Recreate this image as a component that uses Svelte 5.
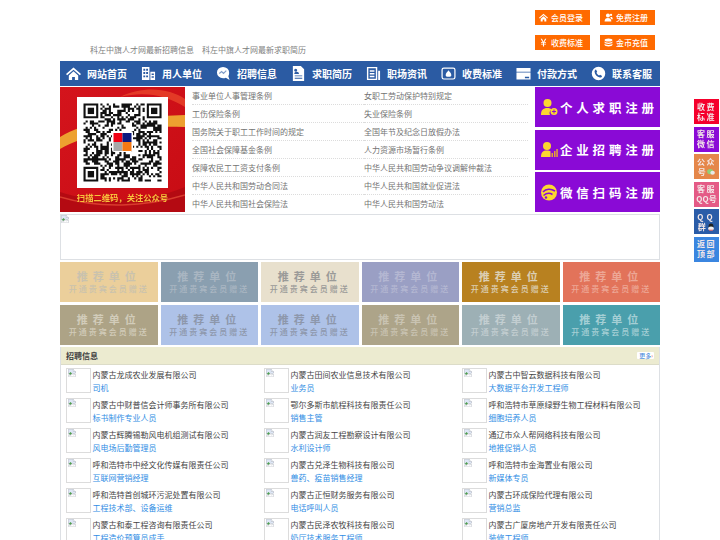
<script>
  const navItems = [
    ['home', '网站首页'], ['building', '用人单位'], ['chat', '招聘信息'], ['doc', '求职简历'],
    ['news', '职场资讯'], ['fee', '收费标准'], ['card', '付款方式'], ['phone', '联系客服']
  ];
  const topButtons = [['home', '会员登录'], ['users', '免费注册'], ['yen', '收费标准'], ['coins', '金币充值']];
  const laws = [
    '事业单位人事管理条例', '女职工劳动保护特别规定',
    '工伤保险条例', '失业保险条例',
    '国务院关于职工工作时间的规定', '全国年节及纪念日放假办法',
    '全国社会保障基金条例', '人力资源市场暂行条例',
    '保障农民工工资支付条例', '中华人民共和国劳动争议调解仲裁法',
    '中华人民共和国劳动合同法', '中华人民共和国就业促进法',
    '中华人民共和国社会保险法', '中华人民共和国劳动法'
  ];
  const tiles = [
    ['#ebcf9b', '#c9c2ae'], ['#8a9fb0', '#a9b6c2'], ['#e8e0cd', '#9a9a98'],
    ['#9a9fc4', '#b4b7d2'], ['#b88120', '#dccfb4'], ['#e2735a', '#eda796'],
    ['#ada386', '#d2ccba'], ['#aec2e8', '#8d97ab'], ['#aec2e8', '#8d97ab'],
    ['#ada489', '#c9c3b2'], ['#9db0b5', '#c3ced1'], ['#4a9fac', '#a5cfd5']
  ];
  const jobs = [
    ['内蒙古龙成农业发展有限公司', '司机'], ['内蒙古田间农业信息技术有限公司', '业务员'], ['内蒙古中智云数据科技有限公司', '大数据平台开发工程师'],
    ['内蒙古中财普信会计师事务所有限公司', '标书制作专业人员'], ['鄂尔多斯市航程科技有限责任公司', '销售主管'], ['呼和浩特市草原绿野生物工程材料有限公司', '细胞培养人员'],
    ['内蒙古辉腾锡勒风电机组测试有限公司', '风电场后勤管理员'], ['内蒙古润友工程勘察设计有限公司', '水利设计师'], ['通辽市众人帮网络科技有限公司', '地推促销人员'],
    ['呼和浩特市中经文化传媒有限责任公司', '互联网营销经理'], ['内蒙古兑泽生物科技有限公司', '兽药、疫苗销售经理'], ['呼和浩特市金海置业有限公司', '新媒体专员'],
    ['呼和浩特首创城环污泥处置有限公司', '工程技术部、设备运维'], ['内蒙古正恒财务服务有限公司', '电话呼叫人员'], ['内蒙古环成保险代理有限公司', '营销总监'],
    ['内蒙古和泰工程咨询有限责任公司', '工程造价预算员成手'], ['内蒙古民泽农牧科技有限公司', '奶厅技术服务工程师'], ['内蒙古广厦房地产开发有限责任公司', '装修工程师']
  ];
  const side = [
    ['收费', '标准', '#f5002c', ''], ['客服', '微信', '#8a0ad6', ''], ['公众', '号', '#e5874a', 'wx'],
    ['客服', 'QQ号', '#e45a86', ''], ['QQ', '群', '#2a5ca8', 'qq'], ['返回', '顶部', '#3b86e0', '']
  ];

  // Deterministic pseudo QR matrix
  const N = 37;
  let seed = 20240;
  const rnd = () => ((seed = (seed * 1103515245 + 12345) & 0x7fffffff) >> 12) % 100;
  let qr = '';
  const inFinder = (x, y) => (x < 8 && y < 8) || (x > N - 9 && y < 8) || (x < 8 && y > N - 9);
  for (let y = 0; y < N; y++) {
    for (let x = 0; x < N; x++) {
      if (inFinder(x, y)) continue;
      if (rnd() < 52) qr += `M${x} ${y}h1v1h-1z`;
    }
  }
  const finders = [[0, 0], [N - 7, 0], [0, N - 7]];
</script>

{#snippet broken()}
  <svg class="broken" viewBox="0 0 16 16" aria-hidden="true">
    <path d="M.5 .5h10l4.500 4.500v3l-3 2-3-2-3 3-5-1z" fill="#dfe8f7" stroke="#a8aeb8"/>
    <path d="M10.500 .5v4.500h4.500" fill="#fff" stroke="#a8aeb8"/>
    <path d="M1.500 10l3.500-4 3 3-2.500 2.500z" fill="#4f9e4f"/>
    <path d="M.5 12l5 1 3-3 3 2 3.500-2v5.500H.5z" fill="#fff" stroke="#a8aeb8" stroke-width=".8"/>
  </svg>
{/snippet}

{#snippet icon(name)}
  <svg class="ic" viewBox="0 0 16 16" aria-hidden="true" fill="currentColor">
    {#if name === 'home'}
      <path d="M8 1.5 0 8.6l1.2 1.3L8 4l6.8 5.9L16 8.6z"/><path d="M3 10 8 5.6l5 4.4v5H9.5v-3.4h-3V15H3z"/>
    {:else if name === 'building'}
      <path fill-rule="evenodd" d="M1 1h8v14H1zM2.5 3v2h2V3zm3 0v2h2V3zm-3 3.500v2h2v-2zm3 0v2h2v-2zm-3 3.500v2h2v-2zm3 0v2h2v-2zM10 6h5v9h-5zm1.300 2v1.500h2.400V8zm0 3v1.500h2.400V11z"/>
    {:else if name === 'chat'}
      <path d="M7.500 1a6.500 6 0 0 0-6.500 6 6.500 6 0 0 0 6.500 6c1.200 0 2-.1 3-.6l4 2.600-1.300-4.200A6 6 0 0 0 14 7a6.500 6 0 0 0-6.500-6z"/>
      <path d="M3.500 8l2.500-2 2 2 3-3" fill="none" stroke="#7f9cc8" stroke-width="1.200"/>
    {:else if name === 'doc'}
      <path fill-rule="evenodd" d="M2 0h8.500L14 3.500V16H2zM5 3a1.600 1.600 0 1 0 .01 0zM3.500 8.500h5c0-1.800-1-2.500-2.500-2.500s-2.500.7-2.500 2.500zM4 10v1h8v-1zm0 2.500v1h8v-1z"/>
    {:else if name === 'news'}
      <path fill-rule="evenodd" d="M1 1h11v14H1zm1.500 1.500v11h8v-11zM4 4.500h5V6H4zm0 3h5V9H4zm0 3h5V12H4zM13 5h2v10h-2z"/>
    {:else if name === 'fee'}
      <path fill-rule="evenodd" d="M3 1.500h10A2.500 2.500 0 0 1 15.500 4v8a2.500 2.500 0 0 1-2.500 2.500H3A2.500 2.500 0 0 1 .5 12V4A2.500 2.500 0 0 1 3 1.500zm0 1.300A1.200 1.200 0 0 0 1.800 4v8A1.200 1.200 0 0 0 3 13.200h10a1.200 1.200 0 0 0 1.200-1.200V4A1.200 1.200 0 0 0 13 2.800z"/>
      <path d="M8 4.500c.6 1.200 3 2.800 3 5 0 1.500-1 2-3 2s-3-.5-3-2c0-2.200 2.400-3.800 3-5z"/>
    {:else if name === 'card'}
      <path fill-rule="evenodd" d="M.5 2h15v4H.5zM.5 7h15v7.500H.5zm9 4.500V13h4.500v-1.500z"/>
    {:else if name === 'phone'}
      <path fill-rule="evenodd" d="M8 .8a7.200 7.200 0 1 0 0 14.400A7.200 7.200 0 0 0 8 .8zM5.300 3.800l1.300 2.300-.8 1.100c.5 1.200 1.500 2.200 2.800 2.900l1.100-.8 2.100 1.400c-.3 1.200-1.300 1.800-2.300 1.600C6.400 11.700 4 9 3.800 6.200c-.1-1.100.5-2 1.500-2.400z"/>
    {:else if name === 'users'}
      <circle cx="7" cy="4.500" r="3.500"/><path d="M1 15c0-4 2.500-6 6-6s6 2 6 6z"/><circle cx="12.500" cy="3.500" r="2"/><path d="M11 7h2c1.500 0 2.500 1 2.500 4H13z"/>
    {:else if name === 'yen'}
      <path d="M3 1.500h2.200L8 6.500l2.800-5H13L9.800 7H12.500v1.400H9V10h3.500v1.400H9V15H7v-3.600H3.500V10H7V8.400H3.500V7h2.700z"/>
    {:else if name === 'coins'}
      <ellipse cx="8" cy="3.500" rx="7" ry="2.800"/><path d="M1 5.800c1 1.800 3.500 2.500 7 2.500s6-.7 7-2.500V8c-1 1.800-3.500 2.500-7 2.500S2 9.800 1 8z"/><path d="M1 9.800c1 1.800 3.500 2.500 7 2.500s6-.7 7-2.500V12.500C14 14.300 11.500 15 8 15s-6-.7-7-2.500z"/>
    {/if}
  </svg>
{/snippet}

<div class="page">
  <header class="top">
    <div class="latest"><span>科左中旗人才网最新招聘信息</span><span>科左中旗人才网最新求职简历</span></div>
    <div class="topbtns">
      {#each topButtons as [ic, label]}
        <a class="topbtn">{@render icon(ic)}<span>{label}</span></a>
      {/each}
    </div>
  </header>

  <nav class="nav">
    {#each navItems as [ic, label]}
      <a class="navitem"><span class="navic">{@render icon(ic)}</span><span>{label}</span></a>
    {/each}
  </nav>

  <section class="hero">
    <svg class="qrimg" viewBox="0 0 125 125" role="img" aria-label="二维码">
      <defs>
        <linearGradient id="redbg" x1="0" y1="0" x2="1" y2="1">
          <stop offset="0" stop-color="#d4141c"/><stop offset="1" stop-color="#c80c14"/>
        </linearGradient>
      </defs>
      <rect width="125" height="125" fill="url(#redbg)"/>
      <path d="M60 10C85 -2 110 2 125 12V20C105 8 85 4 60 10z" fill="#e8452a" opacity=".8"/>
      <path d="M0 50C25 35 60 30 125 28V40C70 38 30 45 0 62z" fill="#eda030"/>
      <path d="M0 105C40 118 90 115 125 100V125H0z" fill="#b40a12"/>
      <path d="M0 110C40 122 85 120 125 108" fill="none" stroke="#e8503a" stroke-width="1.500" opacity=".7"/>
      <rect x="17" y="10" width="91" height="91" fill="#fff"/>
      <g transform="translate(23.500 16.500) scale(2.110)">
        <path d={qr} fill="#111"/>
        {#each finders as [fx, fy]}
          <path fill-rule="evenodd" d={`M${fx} ${fy}h7v7h-7zM${fx + 1} ${fy + 1}v5h5v-5z`} fill="#111"/>
          <rect x={fx + 2} y={fy + 2} width="3" height="3" fill="#111"/>
        {/each}
      </g>
      <rect x="52" y="44" width="21" height="21" rx="2" fill="#fff"/>
      <rect x="53.500" y="46" width="9" height="9" fill="#f00014"/>
      <rect x="62.500" y="46" width="9" height="9" fill="#0c1a80"/>
      <rect x="53.500" y="55" width="9" height="9" fill="#a8a8a8"/>
      <rect x="62.500" y="55" width="9" height="9" fill="#f57a14"/>
      <text x="62.500" y="114" text-anchor="middle" class="qrcap">扫描二维码，关注公众号</text>
    </svg>

    <ul class="laws">
      {#each laws as law}
        <li>{law}</li>
      {/each}
    </ul>

    <div class="regs">
      <a class="reg">
        <svg class="regic" viewBox="0 0 18 18" aria-hidden="true"><circle cx="7.500" cy="5" r="4" fill="#fbd631"/><path d="M1 17c0-5 2-7 6.500-7 2 0 3 .5 4 1.500A4.500 4.500 0 0 0 10 17z" fill="#fbd631"/><circle cx="14" cy="13.500" r="3.500" fill="#fbd631"/><path d="M12 13.500h4M14 11.500v4" stroke="#8a0ad6" stroke-width="1"/></svg>
        <span>个人求职注册</span>
      </a>
      <a class="reg">
        <svg class="regic" viewBox="0 0 18 18" aria-hidden="true"><circle cx="7" cy="5" r="4" fill="#fbd631"/><path d="M1 16c0-5 2-6.500 6-6.500 1.500 0 2.500.2 3.500.8V16z" fill="#fbd631"/><path d="M11.500 12h1.500v4h-1.500zM14 10h1.500v6H14zM16.300 8h1.500v8h-1.500z" fill="#e8a830"/></svg>
        <span>企业招聘注册</span>
      </a>
      <a class="reg">
        <svg class="regic" viewBox="0 0 18 18" aria-hidden="true"><circle cx="9" cy="9.500" r="8" fill="#fbd631"/><path d="M3 9c3-3.500 8-3.500 12-1M3.500 12.500c3-2.500 6.500-2.500 9-1" fill="none" stroke="#8a0ad6" stroke-width="1.500"/><circle cx="6" cy="14.500" r="1.200" fill="#8a0ad6"/></svg>
        <span>微信扫码注册</span>
      </a>
    </div>
  </section>

  <div class="banner">{@render broken()}</div>

  <section class="tiles">
    {#each tiles as [bg, fg]}
      <a class="tile" style="background:{bg};color:{fg}">
        <strong>推荐单位</strong>
        <span>开通贵宾会员赠送</span>
      </a>
    {/each}
  </section>

  <section class="panel">
    <div class="panelhead"><h2>招聘信息</h2><a class="more">更多<i>›</i></a></div>
    <div class="jobs">
      {#each jobs as [company, job]}
        <div class="job">
          <div class="thumb">{@render broken()}</div>
          <div class="jobtext"><div class="company">{company}</div><a class="jobname">{job}</a></div>
        </div>
      {/each}
    </div>
  </section>
</div>

<aside class="side">
  {#each side as [a, b, bg, badge]}
    <a class="sideitem" style="background:{bg}">
      <span class:wide={a === 'QQ'}>{a}</span>
      <span class="second" class:tight={b === 'QQ号'}>{b}
        {#if badge === 'wx'}
          <svg class="sideic" viewBox="0 0 10 8" aria-hidden="true"><ellipse cx="4" cy="3.500" rx="3.800" ry="3.200" fill="#8fd07a"/><ellipse cx="7" cy="5" rx="2.800" ry="2.500" fill="#e8e8e8"/></svg>
        {:else if badge === 'qq'}
          <svg class="sideic" viewBox="0 0 10 10" aria-hidden="true"><ellipse cx="5" cy="4" rx="3" ry="3.500" fill="#222"/><ellipse cx="5" cy="7" rx="3.500" ry="2.500" fill="#eee"/><path d="M2 8.500h6l-1 1H3z" fill="#e33"/></svg>
        {/if}
      </span>
    </a>
  {/each}
</aside>

<style>
  :global(html), :global(body) {
    margin: 0;
    background: #fff;
    overflow: hidden;
  }
  .page {
    width: 600px;
    margin-left: 60px;
    font-family: "Noto Sans CJK SC", "Liberation Sans", sans-serif;
    font-size: 8px;
    color: #666;
  }
  a { text-decoration: none; display: block; }
  .top {
    height: 61px;
    display: flex;
    justify-content: space-between;
    box-sizing: border-box;
    padding: 10px 5px 0 30px;
  }
  .latest {
    display: flex;
    gap: 8px;
    margin-top: 35px;
    line-height: 10px;
    color: #808080;
  }
  .topbtns {
    display: grid;
    grid-template-columns: 55px 55px;
    grid-auto-rows: 15px;
    gap: 10px;
  }
  .topbtn {
    background: #ff6a00;
    color: #fff;
    display: flex;
    align-items: center;
    gap: 3px;
    padding-left: 4px;
    line-height: 15px;
    font-weight: 500;
  }
  .topbtn .ic { width: 9px; height: 9px; }
  .nav {
    height: 25px;
    background: #2b5ba3;
    display: grid;
    grid-template-columns: repeat(8, 75px);
  }
  .navitem {
    color: #fff;
    display: flex;
    align-items: center;
    font-size: 10px;
    font-weight: 700;
    padding-left: 6px;
    line-height: 25px;
  }
  .navic {
    width: 21px;
    display: flex;
  }
  .navic .ic { width: 15px; height: 15px; }
  .hero {
    margin-top: 1px;
    display: flex;
    height: 125px;
  }
  .qrimg {
    width: 125px;
    height: 125px;
    flex: none;
    filter: blur(.25px);
  }
  .qrcap {
    font-size: 8.300px;
    font-weight: 700;
    fill: #f7c23c;
  }
  .laws {
    list-style: none;
    margin: 0 0 0 7px;
    padding: 0;
    width: 336px;
    display: grid;
    grid-template-columns: 172px 164px;
    grid-auto-rows: 18px;
    color: #737373;
    flex: none;
  }
  .laws li {
    line-height: 17px;
    border-bottom: 1px dotted #dcdcdc;
  }
  .laws li:nth-last-child(-n + 2) { border-bottom: 0; }
  .regs {
    margin-left: 7px;
    width: 125px;
    display: grid;
    grid-auto-rows: 40px;
    gap: 2.500px;
  }
  .reg {
    background: #8a0ad6;
    color: #fff;
    display: flex;
    align-items: center;
    padding-left: 5px;
    font-size: 12.500px;
    font-weight: 700;
    letter-spacing: 3.800px;
    white-space: nowrap;
  }
  .regic { width: 18px; height: 18px; margin-right: 2px; flex: none; }
  .banner {
    margin-top: 2px;
    height: 46px;
    box-sizing: border-box;
    border: 1px solid #dde0e4;
    line-height: 0;
  }
  .broken { width: 8px; height: 8px; display: block; }
  .tiles {
    margin-top: 2px;
    display: grid;
    grid-template-columns: repeat(6, 1fr);
    grid-auto-rows: 40px;
    gap: 2.500px 3px;
  }
  .tile {
    display: flex;
    flex-direction: column;
    align-items: center;
    padding-top: 7px;
    box-sizing: border-box;
  }
  .tile strong {
    font-size: 11px;
    line-height: 14px;
    letter-spacing: 5px;
    font-weight: 700;
  }
  .tile span {
    font-size: 8px;
    line-height: 12px;
    letter-spacing: 2px;
    font-weight: 500;
  }
  .panel {
    margin-top: 2.500px;
    border-right: 1px solid #dde0e4;
    border-left: 1px solid #dde0e4;
  }
  .panelhead {
    height: 18px;
    background: #ecebd0;
    border-bottom: 1px solid #dcdcc8;
    box-sizing: border-box;
    display: flex;
    align-items: center;
    justify-content: space-between;
    padding: 0 5px;
  }
  .panelhead h2 {
    margin: 0;
    font-size: 8px;
    font-weight: 700;
    color: #444;
  }
  .more {
    background: #fff;
    color: #3a7fd8;
    font-size: 6px;
    line-height: 7px;
    padding: 0 1px 0 2px;
    border-radius: 1px;
  }
  .more i { color: #e66; font-style: normal; }
  .jobs {
    padding: 3px 0 0 4.500px;
    display: grid;
    grid-template-columns: repeat(3, 198px);
    grid-auto-rows: 30px;
  }
  .job {
    display: flex;
    gap: 2px;
    align-items: flex-start;
  }
  .thumb {
    width: 25px;
    height: 25px;
    box-sizing: border-box;
    border: 1px solid #dcdcdc;
    padding: 0 0 0 1px;
    flex: none;
    line-height: 0;
  }
  .jobtext {
    line-height: 13px;
    white-space: nowrap;
  }
  .company { color: #444; }
  .jobname { color: #2f8de4; }
  .side {
    position: fixed;
    left: 694px;
    top: 99px;
    width: 25px;
    display: grid;
    grid-auto-rows: 25px;
    gap: 2.500px;
    font-family: "Noto Sans CJK SC", "Liberation Sans", sans-serif;
  }
  .sideitem {
    color: #f4e8e8;
    font-size: 8px;
    font-weight: 700;
    line-height: 10px;
    letter-spacing: 1.500px;
    display: flex;
    flex-direction: column;
    align-items: center;
    justify-content: center;
    text-align: center;
  }
  .sideitem span { white-space: nowrap; display: flex; align-items: center; }
  .sideitem .wide { letter-spacing: 3px; }
  .sideitem .tight { letter-spacing: 0; }
  .sideic { width: 8px; height: 8px; margin-left: 0; }
</style>
